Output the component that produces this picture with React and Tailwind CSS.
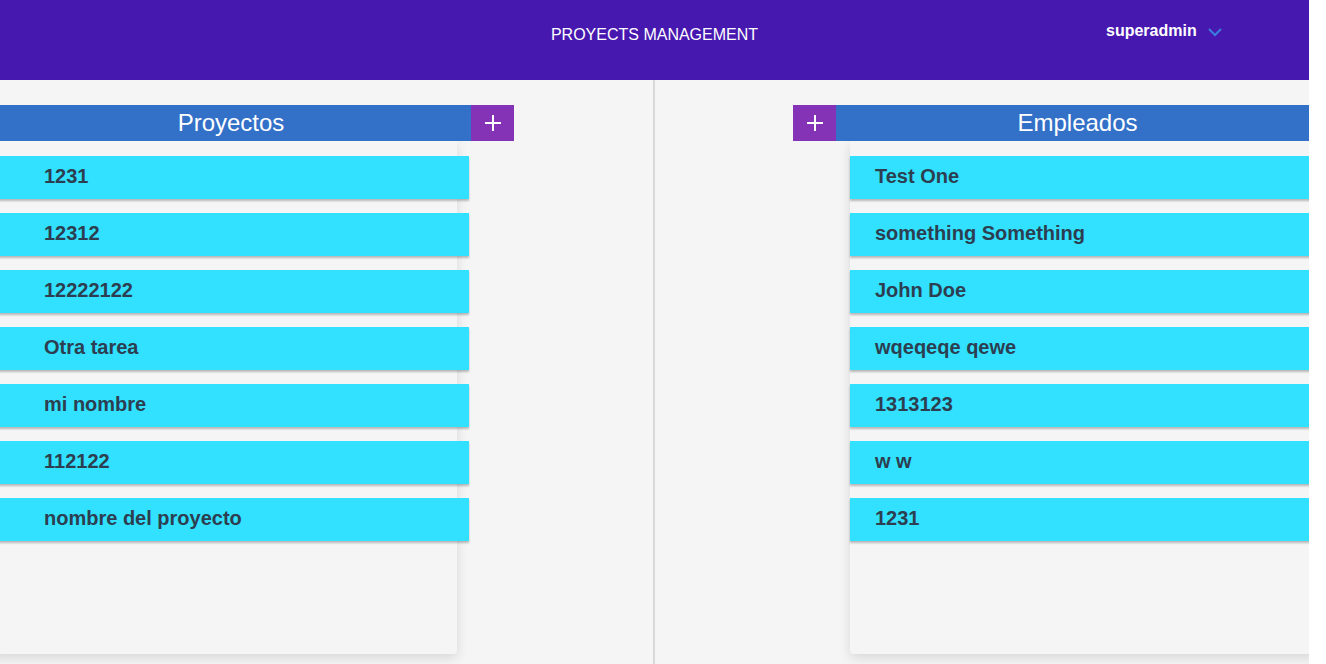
import * as React from "react"

const proyectos = ["1231", "12312", "12222122", "Otra tarea", "mi nombre", "112122", "nombre del proyecto"]
const empleados = ["Test One", "something Something", "John Doe", "wqeqeqe qewe", "1313123", "w w", "1231"]

const PlusButton = () => (
  <button className="w-[43px] h-full bg-[#8533b6] flex items-center justify-center shrink-0">
    <svg width="18" height="18" viewBox="0 0 18 18">
      <line x1="9" y1="1" x2="9" y2="17" stroke="white" strokeWidth="2" />
      <line x1="1" y1="9" x2="17" y2="9" stroke="white" strokeWidth="2" />
    </svg>
  </button>
)

const Card = ({ label, className }) => (
  <div
    className={
      "h-[43px] w-[478px] bg-[#31e1ff] flex items-center pb-[4px] text-[20px] font-bold text-[#2c3e50] shadow-[0_2px_2px_rgba(0,0,0,0.25)] " +
      className
    }
  >
    {label}
  </div>
)

export default function App() {
  return (
    <div className="w-[1309px] h-[664px] bg-[#f5f5f5] overflow-hidden font-['Liberation_Sans',Arial,sans-serif]">
      {/* Top bar */}
      <header className="h-[80px] bg-[#4718b0] relative">
        <div className="absolute left-0 right-0 top-[23px] text-center text-white text-[16px]">
          PROYECTS MANAGEMENT
        </div>
        <div className="absolute left-[1106px] top-[19px] flex items-center gap-[11px] text-white text-[16px] font-bold">
          superadmin
          <svg width="14" height="9" viewBox="0 0 14 9" className="mt-[3px]">
            <polyline points="1,1 7,7 13,1" fill="none" stroke="#3b7ddd" strokeWidth="2" />
          </svg>
        </div>
      </header>

      <main className="flex h-[584px]">
        {/* Proyectos */}
        <section className="w-[653px] shrink-0 overflow-hidden">
          <div className="ml-[-9px] w-[523px] mt-[25px]">
            <div className="flex h-[36px]">
              <div className="flex-1 bg-[#3370c8] text-white text-[24px] flex items-center justify-center">
                Proyectos
              </div>
              <PlusButton />
            </div>
            <div className="w-[466px] h-[513px] bg-[#f5f5f5] rounded-b-[3px] shadow-[0_4px_12px_rgba(0,0,0,0.12)] pt-[15px] flex flex-col gap-[14px]">
              {proyectos.map((p) => (
                <Card key={p} label={p} className="pl-[53px]" />
              ))}
            </div>
          </div>
        </section>

        <div className="w-[2px] bg-[#d9d9d9] shrink-0" />

        {/* Empleados */}
        <section className="flex-1 overflow-hidden">
          <div className="ml-[138px] w-[526px] mt-[25px]">
            <div className="flex h-[36px]">
              <PlusButton />
              <div className="flex-1 bg-[#3370c8] text-white text-[24px] flex items-center justify-center">
                Empleados
              </div>
            </div>
            <div className="ml-[57px] w-[466px] h-[513px] bg-[#f5f5f5] rounded-b-[3px] shadow-[0_4px_12px_rgba(0,0,0,0.12)] pt-[15px] flex flex-col gap-[14px]">
              {empleados.map((e, i) => (
                <Card key={i} label={e} className="pl-[25px]" />
              ))}
            </div>
          </div>
        </section>
      </main>
    </div>
  )
}
